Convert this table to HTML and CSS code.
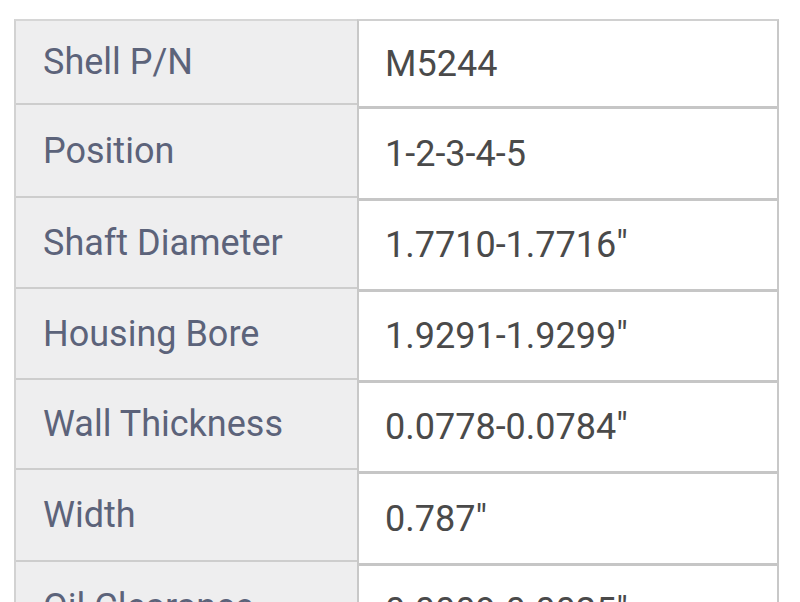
FILE: index.html
```html
<!DOCTYPE html>
<html>
<head>
<meta charset="utf-8">
<link rel="stylesheet" href="styles.css">
</head>
<body>
<div class="spec">
  <div class="col labels">
    <div class="cell r1">Shell P/N</div>
    <div class="cell r2">Position</div>
    <div class="cell r3">Shaft Diameter</div>
    <div class="cell r4">Housing Bore</div>
    <div class="cell r5">Wall Thickness</div>
    <div class="cell r6">Width</div>
    <div class="cell r7">Oil Clearance</div>
  </div>
  <div class="col values">
    <div class="cell r1">M5244</div>
    <div class="cell r2">1-2-3-4-5</div>
    <div class="cell r3">1.7710-1.7716"</div>
    <div class="cell r4">1.9291-1.9299"</div>
    <div class="cell r5">0.0778-0.0784"</div>
    <div class="cell r6">0.787"</div>
    <div class="cell r7">0.0009-0.0025"</div>
  </div>
</div>
</body>
</html>
```

FILE: styles.css
```css
html, body {
  margin: 0;
  padding: 0;
  background: #ffffff;
  overflow: hidden;
  height: 602px;
}

.spec {
  display: flex;
  margin: 19px 0 0 14px;
  font-family: Roboto, "Liberation Sans", sans-serif;
  font-size: 36px;
}

.col {
  display: flex;
  flex-direction: column;
}

.cell {
  box-sizing: border-box;
  display: flex;
  align-items: center;
  border-bottom: 2px solid #cdcdcd;
}

.labels {
  width: 341px;
  background: #eeeeef;
  border-left: 2px solid #d2d2d2;
  border-top: 2px solid #d6d6d6;
}

.labels .cell {
  padding-left: 27px;
  color: #5c637a;
}

.labels .r1 { height: 84px; }
.labels .r2 { height: 93px; }
.labels .r3 { height: 91px; }
.labels .r4 { height: 91px; }
.labels .r5 { height: 90px; }
.labels .r6 { height: 92px; }
.labels .r7 { height: 92px; }

.values {
  width: 418px;
  background: #ffffff;
  border-left: 2px solid #c8c8c8;
  border-right: 2px solid #c8c8c8;
  border-top: 2px solid #d0d0d0;
}

.values .cell {
  padding-left: 26px;
  color: #4a4a4a;
  border-bottom-width: 3px;
  border-bottom-color: #c6c6c6;
}

.values .r1 { height: 88px; }
.values .r2 { height: 92px; }
.values .r3 { height: 91px; }
.values .r4 { height: 91px; }
.values .r5 { height: 91px; }
.values .r6 { height: 92px; }
.values .r7 { height: 92px; }
```
